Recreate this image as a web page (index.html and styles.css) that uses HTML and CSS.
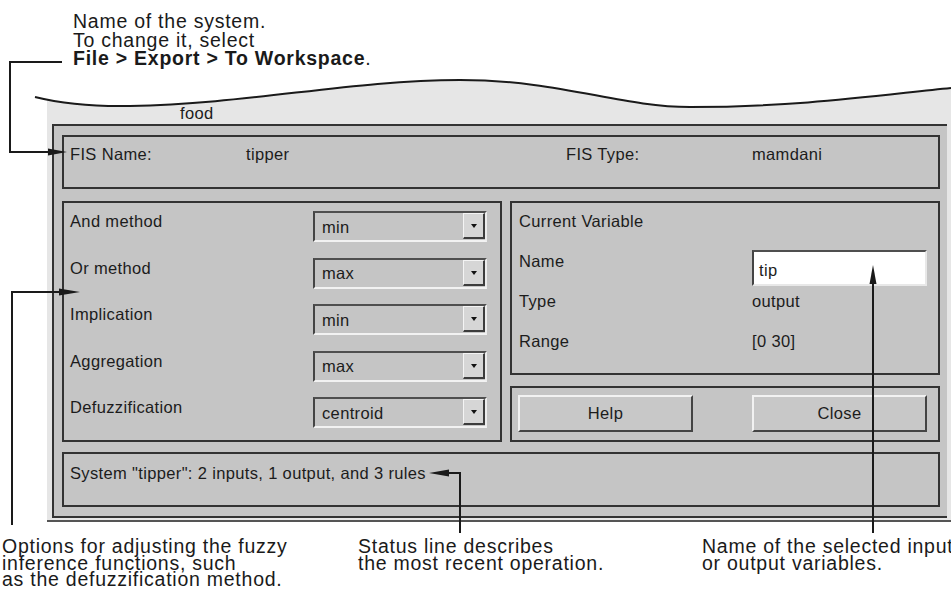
FILE: index.html
```html
<!DOCTYPE html>
<html>
<head>
    <meta charset="utf-8">
    <title>FIS Editor</title>
    <link rel="stylesheet" href="styles.css">
</head>
<body>
<div class="figure">
    <p class="note note-top">Name of the system.<br>To change it, select<br><b>File &gt; Export &gt; To Workspace</b>.</p>

    <div class="window">
        <div class="menubar">food</div>
        <div class="frame">
            <div class="box fis-info">
                <span>FIS Name:</span>
                <span>tipper</span>
                <span>FIS Type:</span>
                <span>mamdani</span>
            </div>

            <div class="middle">
                <div class="box methods">
                    <div class="label">And method</div>
                    <div class="combo"><span>min</span><i class="combo-btn"></i></div>
                    <div class="label">Or method</div>
                    <div class="combo"><span>max</span><i class="combo-btn"></i></div>
                    <div class="label">Implication</div>
                    <div class="combo"><span>min</span><i class="combo-btn"></i></div>
                    <div class="label">Aggregation</div>
                    <div class="combo"><span>max</span><i class="combo-btn"></i></div>
                    <div class="label">Defuzzification</div>
                    <div class="combo"><span>centroid</span><i class="combo-btn"></i></div>
                </div>

                <div class="side">
                    <div class="box variable">
                        <div class="var-title">Current Variable</div>
                        <div>Name</div>
                        <div><div class="edit">tip</div></div>
                        <div>Type</div>
                        <div>output</div>
                        <div>Range</div>
                        <div>[0 30]</div>
                    </div>
                    <div class="box actions">
                        <button class="btn">Help</button>
                        <button class="btn">Close</button>
                    </div>
                </div>
            </div>

            <div class="box status">System "tipper": 2 inputs, 1 output, and 3 rules</div>
        </div>
    </div>

    <div class="notes-bottom">
        <p class="note">Options for adjusting the fuzzy<br>inference functions, such<br>as the defuzzification method.</p>
        <p class="note">Status line describes<br>the most recent operation.</p>
        <p class="note">Name of the selected input<br>or output variables.</p>
    </div>

    <!-- torn edge of the window and the callout lines -->
    <svg class="callouts" width="951" height="600" viewBox="0 0 951 600">
        <path d="M30,72 L30,97 L35,97 Q75,107 130,106 C250,104 350,80 460,80 C560,80 620,107 690,107 C800,107 880,95 951,88 L951,72 Z" fill="#fff"/>
        <path d="M35,97 Q75,107 130,106 C250,104 350,80 460,80 C560,80 620,107 690,107 C800,107 880,95 951,88" fill="none" stroke="#1a1a1a" stroke-width="2"/>

        <g fill="none" stroke="#1a1a1a" stroke-width="2">
            <polyline points="62,62 10,62 10,152 50,152"/>
            <polyline points="12,525 12,292 61,292"/>
            <polyline points="460,533 460,473 447,473"/>
            <polyline points="873,533 873,282"/>
        </g>
        <g fill="#1a1a1a">
            <polygon points="67,152 48,148.5 48,155.5"/>
            <polygon points="80,292 59,288.5 59,295.5"/>
            <polygon points="429,473 449,469.5 449,476.5"/>
            <polygon points="873,265 869.5,284 876.5,284"/>
        </g>
    </svg>
</div>
</body>
</html>
```

FILE: styles.css
```css
body {
    margin: 0;
    background-color: #fff;
    font-family: "Liberation Sans", Arial, sans-serif;
    overflow: hidden;
}

.figure {
    position: relative;
    width: 951px;
    height: 600px;
    overflow: hidden;
}

/* callout texts */
.note {
    margin: 0;
    font-size: 19.5px;
    line-height: 18.5px;
    letter-spacing: 0.75px;
    color: #1a1a1a;
    white-space: nowrap;
}

.note-top {
    height: 55.5px;
    padding: 12px 0 0 73px;
}

.notes-bottom {
    display: grid;
    grid-template-columns: 356px 344px auto;
    margin-top: 16px;
    padding-left: 2px;
}

.notes-bottom .note {
    line-height: 16.5px;
}

.callouts {
    position: absolute;
    top: 0;
    left: 0;
    pointer-events: none;
}

/* the dialog window */
.window {
    width: 904px;
    margin: 7.5px 0 0 47px;
    padding-bottom: 2px;
    background-color: #e6e6e6;
    border-bottom: 2px solid #555;
    font-size: 16.5px;
    line-height: 20px;
    letter-spacing: 0.35px;
    color: #1c1c1c;
}

.menubar {
    height: 49px;
    box-sizing: border-box;
    padding: 27.5px 0 0 133px;
}

.frame {
    margin: 0 4px 0 5px;
    padding: 9px 7px 9px 8px;
    background-color: #c5c5c5;
    border: 2px solid #333;
    border-right: none;
}

.box {
    box-sizing: border-box;
    border: 2px solid #333;
}

.fis-info {
    display: grid;
    grid-template-columns: 176px 320px 186px 1fr;
    height: 54px;
    padding: 7px 0 0 6px;
}

.middle {
    display: grid;
    grid-template-columns: 440px 430px;
    column-gap: 8px;
    height: 241px;
    margin: 12px 0 10px;
}

.methods {
    display: grid;
    grid-template-columns: 243px 174px;
    grid-auto-rows: 31px;
    row-gap: 15.5px;
    padding: 8px 13px 12px 6px;
}

.combo {
    display: flex;
    box-sizing: border-box;
    width: 174px;
    height: 31px;
    border-top: 2px solid #4f4f4f;
    border-left: 2px solid #444;
    border-right: 2px solid #ececec;
    border-bottom: 2px solid #f2f2f2;
}

.combo span {
    padding: 3.5px 0 0 7px;
}

.combo-btn {
    position: relative;
    box-sizing: border-box;
    width: 22px;
    height: 26px;
    margin-left: auto;
    background-color: #d6d6d6;
    border-top: 1px solid #f4f4f4;
    border-left: 1px solid #f4f4f4;
    border-right: 2px solid #3c3c3c;
    border-bottom: 2px solid #3c3c3c;
}

.combo-btn::after {
    content: "";
    position: absolute;
    left: 7px;
    top: 10px;
    border-left: 3px solid transparent;
    border-right: 3px solid transparent;
    border-top: 4px solid #111;
}

.side {
    display: flex;
    flex-direction: column;
    gap: 11px;
}

.variable {
    display: grid;
    grid-template-columns: 233px 1fr;
    grid-auto-rows: 40px;
    height: 174px;
    padding: 7.5px 7px 0 7px;
}

.var-title {
    grid-column: 1 / 3;
}

.edit {
    box-sizing: border-box;
    width: 175px;
    height: 36px;
    margin-top: -0.5px;
    padding: 7.5px 0 0 5px;
    background-color: #fff;
    border-top: 2px solid #4f4f4f;
    border-left: 2px solid #444;
    border-right: 2px solid #e8e8e8;
    border-bottom: 2px solid #e8e8e8;
}

.actions {
    display: grid;
    grid-template-columns: 234px 175px;
    height: 56px;
    padding: 7px 0 0 6px;
}

.btn {
    box-sizing: border-box;
    width: 175px;
    height: 37px;
    padding: 0;
    background-color: #c8c8c8;
    border-top: 2px solid #f2f2f2;
    border-left: 2px solid #f2f2f2;
    border-right: 2px solid #444;
    border-bottom: 2px solid #444;
    font-family: "Liberation Sans", Arial, sans-serif;
    font-size: 16.5px;
    letter-spacing: 0.35px;
    color: #1c1c1c;
}

.status {
    height: 55px;
    padding: 8.5px 6px 0;
}
```
